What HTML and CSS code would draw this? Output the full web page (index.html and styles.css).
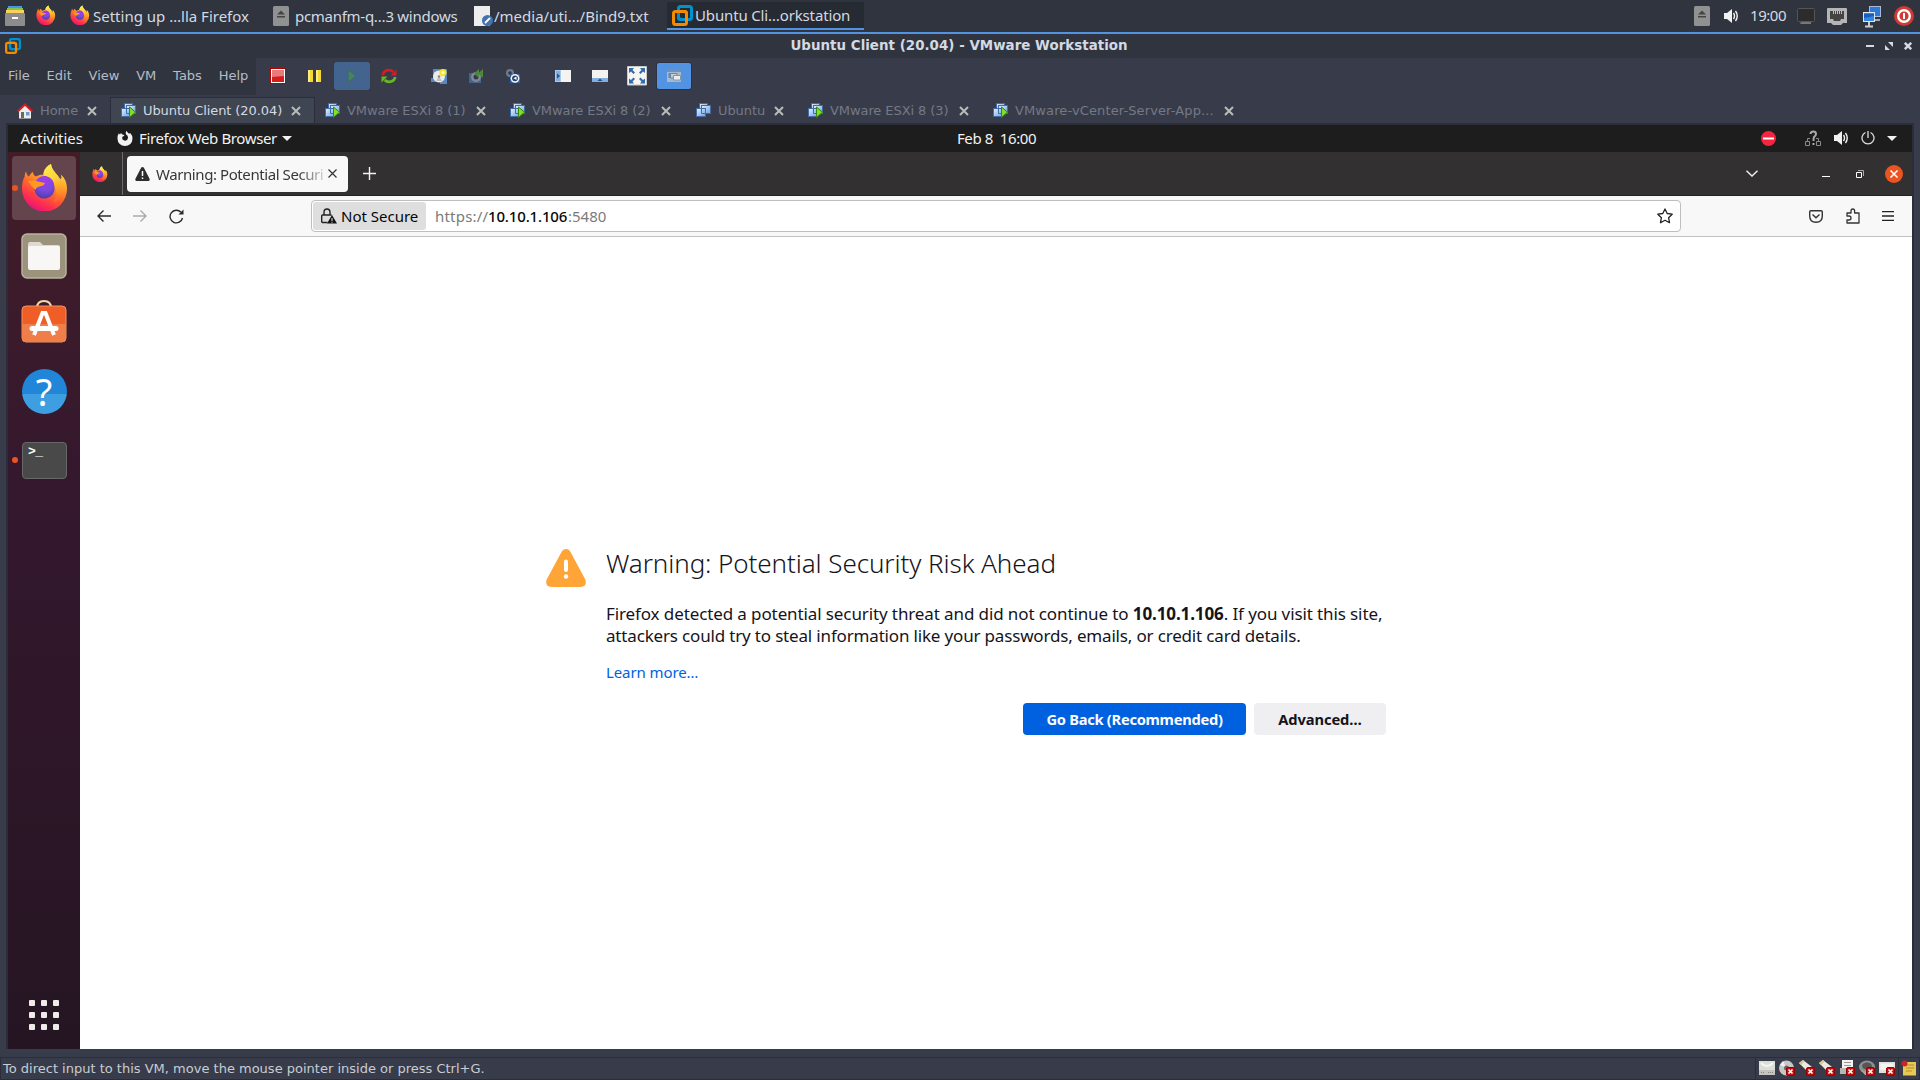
FILE: index.html
```html
<!DOCTYPE html>
<html lang="en">
<head>
<meta charset="utf-8">
<title>Ubuntu Client (20.04) - VMware Workstation</title>
<link rel="stylesheet" href="styles.css">
</head>
<body>
<svg class="defs" width="0" height="0" aria-hidden="true">
  <defs>
    <linearGradient id="ffBody" x1=".8" y1="0" x2=".3" y2="1">
      <stop offset="0" stop-color="#fff44f"/><stop offset=".3" stop-color="#ffb02c"/><stop offset=".55" stop-color="#ff6a2b"/><stop offset=".8" stop-color="#ff2f50"/><stop offset="1" stop-color="#e3117d"/>
    </linearGradient>
    <linearGradient id="ffFlame" x1="0" y1="0" x2=".3" y2="1">
      <stop offset="0" stop-color="#fff350"/><stop offset=".5" stop-color="#ffd03a"/><stop offset="1" stop-color="#ff8a20" stop-opacity=".3"/>
    </linearGradient>
    <radialGradient id="ffGlobe" cx=".55" cy=".15" r=".9">
      <stop offset="0" stop-color="#a738e8"/><stop offset=".55" stop-color="#7a4ae0"/><stop offset="1" stop-color="#4a3aa0"/>
    </radialGradient>
    <linearGradient id="screen" x1="0" y1="0" x2="1" y2="1">
      <stop offset="0" stop-color="#e4f0ff"/><stop offset="1" stop-color="#6fa0dc"/>
    </linearGradient>
    <symbol id="firefox" viewBox="0 0 48 48">
      <path d="M5 8.500C5.500 11 6.500 12.500 8 13.500C9 11.500 10 10 12 9C12 11 13 12.500 15 13.500C18 12 20 11.500 22.500 12C22.500 8 26 3 30 1C30.500 6 34 9 37 13C38 15 39 16 40 16C40.500 14.500 40.500 13 40 11.500C44 15 46 20 46 26A22.500 22.500 0 0 1 1 26C1 20 2 16.500 3.500 14C3.800 12 4 10 5 8.500Z" fill="url(#ffBody)"/>
      <path d="M22.500 12C22 7 26 3 30 1C30.500 6 34 9 37 13C40 17 43 22 41 31C39 36 36 39 32 40C36 34 36 26 32 21C30 17 26 14 22.500 12Z" fill="url(#ffFlame)"/>
      <path d="M15 18Q18 12.500 25 13Q33 15 33.500 24A10 10 0 0 1 13.500 27Q12 23 15 18Z" fill="url(#ffGlobe)"/>
      <path d="M7 18Q13 17 17 18.500L24 20Q23 23 18.500 23.500Q15 24 14.500 27Q11 24 7 18Z" fill="#ff9a1f"/>
    </symbol>
    <symbol id="vmware" viewBox="0 0 21 21">
      <rect x="6.500" y="1.500" width="13" height="13" rx="2" fill="none" stroke="#0091cf" stroke-width="3"/>
      <rect x="1.500" y="6.500" width="13" height="13" rx="2" fill="none" stroke="#f38b00" stroke-width="3"/>
      <path d="M6.500 8V11.500Q6.500 14.500 9.500 14.500H11" fill="none" stroke="#0091cf" stroke-width="3"/>
      <path d="M6 6.500H12.500Q14.500 6.500 14.500 8.500V11" fill="none" stroke="#f38b00" stroke-width="3"/>
    </symbol>
    <symbol id="vm" viewBox="0 0 15 15">
      <g stroke="#3e6da9"><rect x="3.500" y=".5" width="8" height="7" fill="url(#screen)"/><rect x="5.500" y="2.500" width="9" height="8" fill="url(#screen)"/><rect x=".5" y="5.500" width="9" height="8" fill="url(#screen)"/><path d="M5.500 5V10.500H9" fill="none"/></g>
    </symbol>
    <symbol id="vmOn" viewBox="0 0 15 15">
      <use href="#vm" width="15" height="15"/><path d="M8.500 4V14.500L14.500 9.200Z" fill="#7fe02a" stroke="#35860c"/>
    </symbol>
    <symbol id="eject" viewBox="0 0 16 20">
      <rect width="16" height="20" rx="1.500" fill="#919191"/><path d="M4 8.500L8 4.500L12 8.500ZM4 10H12V11.500H4Z" fill="#454545"/>
    </symbol>
    <symbol id="cross" viewBox="0 0 10 10"><path d="M1 1L9 9M9 1L1 9" fill="none" stroke="currentColor" stroke-width="2"/></symbol>
    <symbol id="badge" viewBox="0 0 9 9"><rect x=".5" y=".5" width="8" height="8" rx="1.500" fill="#cf0b0b" stroke="#930000"/><path d="M2.500 2.500L6.500 6.500M6.500 2.500L2.500 6.500" stroke="#fff" stroke-width="1.600"/></symbol>
    <symbol id="speaker" viewBox="0 0 15 14"><path d="M0 4H3L8 0V14L3 10H0Z" fill="#f2f2f2"/><path d="M9.500 4Q11.500 7 9.500 10M11.500 2Q15 7 11.500 12" fill="none" stroke="#f2f2f2" stroke-width="1.400"/></symbol>
    <symbol id="sceneCam" viewBox="0 0 16 16"><rect x="1" y="5" width="12" height="10" fill="#46638c"/><circle cx="8" cy="9" r="5" fill="#838992"/><circle cx="8" cy="9" r="2.500" fill="#333b49"/></symbol>
  </defs>
</svg>

<header class="panel">
  <svg class="p-files" viewBox="0 0 20 20"><path d="M3 0H17V3H3Z" fill="#4795e8"/><path d="M2 2H18V5H2Z" fill="#83c44b"/><path d="M1 4H19V8H1Z" fill="#f9d15b"/><rect y="7" width="20" height="13" rx="1" fill="#8c8c8c"/><path d="M7 11H13V13H7Z" fill="#fff"/></svg>
  <svg class="p-ff"><use href="#firefox"/></svg>
  <div class="task task-ff"><svg class="i20"><use href="#firefox"/></svg><span>Setting up …lla Firefox</span></div>
  <div class="task task-fm"><svg class="i-eject"><use href="#eject"/></svg><span>pcmanfm-q…3 windows</span></div>
  <div class="task task-txt"><svg class="i20" viewBox="0 0 20 20"><path d="M1 0H17V20H1Z" fill="#eee"/><circle cx="14.500" cy="14.500" r="5.500" fill="#4273ad"/><path d="M12 17L17 12" stroke="#fff" stroke-width="1.800"/></svg><span>/media/uti…/Bind9.txt</span></div>
  <div class="task task-vm"><svg class="i21"><use href="#vmware"/></svg><span>Ubuntu Cli…orkstation</span></div>
  <div class="tray">
    <svg class="i-eject"><use href="#eject"/></svg>
    <svg class="i-spk"><use href="#speaker"/></svg>
    <span class="clock">19:00</span>
    <svg class="t-mon" viewBox="0 0 18 16"><rect x=".5" y=".5" width="17" height="13" rx="1" fill="#2c2c2c" stroke="#555"/><path d="M4 14H14V16H3Z" fill="#777"/></svg>
    <svg class="t-eth" viewBox="0 0 20 17"><path d="M1 0H19Q20 0 20 1V15H16L14 17H6L4 15H0V1Q0 0 1 0Z" fill="#b5b5b5"/><path d="M3 3H17V11H14L13 13H7L6 11H3Z" fill="#444"/><path d="M6.500 3V6M8.500 3V6M10.500 3V6M12.500 3V6M14.500 3V6" stroke="#e5c14f"/></svg>
    <svg class="t-net" viewBox="0 0 20 22"><rect x="7.500" y=".5" width="11" height="10" fill="#2d79d9" stroke="#a9bcd5"/><path d="M11 14H18" stroke="#aaa" stroke-width="2"/><rect x="1.500" y="6.500" width="11" height="9" fill="#3187e3" stroke="#dce7f4"/><path d="M2 8H12V10L2 12Z" fill="#1a5dbc"/><path d="M7 16V20M3 20.500H11" stroke="#c9cdd1" stroke-width="2"/></svg>
    <svg class="t-pow" viewBox="0 0 20 20"><circle cx="10" cy="10" r="10" fill="#cf3a32"/><circle cx="10" cy="10" r="5.800" fill="none" stroke="#fff" stroke-width="2.400"/><path d="M10 7V13" stroke="#fff" stroke-width="2"/></svg>
  </div>
</header>

<main class="workstation">
  <div class="titlebar">
    <svg class="title-icon"><use href="#vmware"/></svg>
    <h1>Ubuntu Client (20.04) - VMware Workstation</h1>
    <svg class="title-btns" viewBox="0 0 46 8"><path d="M0 3H8V5H0Z" fill="#d3dae3"/><path d="M19 3V8H24ZM22 0H27V5Z" fill="#d3dae3"/><path d="M38.800 .8L45.200 7.200M45.200 .8L38.800 7.200" stroke="#d3dae3" stroke-width="2.400"/></svg>
  </div>

  <div class="menurow">
    <nav class="menus"><span>File</span><span>Edit</span><span>View</span><span>VM</span><span>Tabs</span><span>Help</span></nav>
    <div class="tools">
      <svg class="tool" viewBox="0 0 16 16"><rect x="1.500" y="1.500" width="13" height="13" fill="#d81c1c" stroke="#fff"/><path d="M2 2H14V8L2 9Z" fill="#e77a7a"/><rect x=".5" y=".5" width="15" height="15" fill="none" stroke="#b90000"/></svg>
      <svg class="tool" viewBox="0 0 16 16"><path d="M1 2H6V14H1ZM9 2H14V14H9Z" fill="#f5d832"/><path d="M1 2H3V14H1ZM9 2H11V14H9Z" fill="#faeb83"/></svg>
      <div class="play"><svg viewBox="0 0 16 16"><path d="M4 1.500L12 8L4 14.500Z" fill="#4a8067" stroke="#3a6b62"/></svg></div>
      <svg class="tool" viewBox="0 0 16 16"><path d="M1.800 7Q3 2.200 8 2.200Q10.500 2.200 12.300 4" fill="none" stroke="#d41c22" stroke-width="2.800"/><path d="M15.500 1.500V7.500H9.500Z" fill="#d41c22"/><path d="M14.200 9Q13 13.800 8 13.800Q5.500 13.800 3.700 12" fill="none" stroke="#65b81f" stroke-width="2.800"/><path d="M.5 14.500V8.500H6.500Z" fill="#65b81f"/></svg>
      <svg class="tool" viewBox="0 0 16 16"><path d="M2 1H16V16H9V14H0V10H2Z" fill="#5a88be"/><circle cx="8" cy="8.500" r="6" fill="#ecebe6"/><path d="M8 8L5 13H11Z" fill="#bfc0c0"/><circle cx="8" cy="8.500" r="1.300" fill="#888"/><circle cx="12" cy="4.500" r="3.600" fill="#f4e326"/><circle cx="12" cy="4.500" r="1.500" fill="#fffbd0"/></svg>
      <svg class="tool" viewBox="0 0 16 16"><use href="#sceneCam" width="16" height="16"/><path d="M15 1V10L10 5.500ZM11 1V10L6 5.500Z" fill="#4d873c"/></svg>
      <svg class="tool" viewBox="0 0 16 16"><circle cx="5" cy="5" r="4" fill="#6f7a8a"/><circle cx="5" cy="5" r="1.800" fill="#303846"/><path d="M5 6H15V15H5Z" fill="#315f9b"/><circle cx="10" cy="10.300" r="4.400" fill="#f3f5f8"/><circle cx="10" cy="10.300" r="2.900" fill="#26436f"/><path d="M11.500 8.500V12L8.500 10.300Z" fill="#fff"/></svg>
      <svg class="tool" viewBox="0 0 16 16"><path d="M0 2H16V14H0Z" fill="#f4f3f0"/><path d="M.5 2.500H5.500V13.500H.5Z" fill="#83aee0" stroke="#a9c9ed"/><path d="M2 5.500L5 8L2 10.500Z" fill="#275186"/></svg>
      <svg class="tool" viewBox="0 0 16 16"><path d="M0 2H16V14H0Z" fill="#f4f3f0"/><path d="M0 10H16V14H0Z" fill="#83aee0"/><path d="M5.500 13L8 10.500L10.500 13Z" fill="#275186"/></svg>
      <svg class="tool full" viewBox="0 0 20 20"><path d="M.5 .5H19.500V19H.5Z" fill="#f6f5f2" stroke="#c9c9c5"/><path d="M2 2H7L5.500 4L8 6.500L6.500 8L4 5.500L2 7ZM18 2H13L14.500 4L12 6.500L13.500 8L16 5.500L18 7ZM2 17.500H7L5.500 15.500L8 13L6.500 11.500L4 14L2 12.500ZM18 17.500H13L14.500 15.500L12 13L13.500 11.500L16 14L18 12.500Z" fill="#316aad"/></svg>
      <div class="unity"><svg viewBox="0 0 16 14"><path d="M1 1H15V13H1Z" fill="#a5b9d1"/><path d="M1 1H15V3H1Z" fill="#6f93c0"/><path d="M2.500 4H4V9H2.500Z" fill="#6685ab"/><path d="M4.500 4.500H11V9H4.500Z" fill="#c3ced9" stroke="#6f86a2"/><path d="M7.500 6.500H14.500V11H7.500Z" fill="#eceeed" stroke="#8796a6"/></svg></div>
    </div>
  </div>

  <div class="vmtabs">
    <div class="vmtab home"><svg class="i16" viewBox="0 0 16 16"><path d="M2 8L8 2L14 8V15.500H2Z" fill="#ececea"/><path d="M4 9H7V15H4Z" fill="#6b6a5b"/><path d="M9 9H12.500V12.500H9Z" fill="#6e9acb"/><path d="M.7 8.500L8 1.500L15.300 8.500" fill="none" stroke="#d81b20" stroke-width="2"/></svg><span>Home</span><svg class="x"><use href="#cross"/></svg></div>
    <div class="vmtab current"><svg class="i15"><use href="#vmOn"/></svg><span>Ubuntu Client (20.04)</span><svg class="x"><use href="#cross"/></svg></div>
    <div class="vmtab esx1"><svg class="i15"><use href="#vmOn"/></svg><span>VMware ESXi 8 (1)</span><svg class="x"><use href="#cross"/></svg></div>
    <div class="vmtab esx2"><svg class="i15"><use href="#vmOn"/></svg><span>VMware ESXi 8 (2)</span><svg class="x"><use href="#cross"/></svg></div>
    <div class="vmtab ubu"><svg class="i15"><use href="#vm"/></svg><span>Ubuntu</span><svg class="x"><use href="#cross"/></svg></div>
    <div class="vmtab esx3"><svg class="i15"><use href="#vmOn"/></svg><span>VMware ESXi 8 (3)</span><svg class="x"><use href="#cross"/></svg></div>
    <div class="vmtab vcsa"><svg class="i15"><use href="#vmOn"/></svg><span>VMware-vCenter-Server-App...</span><svg class="x"><use href="#cross"/></svg></div>
  </div>

  <section class="guest">
    <div class="gnome">
      <span class="activities">Activities</span>
      <div class="appmenu"><svg class="i16" viewBox="0 0 16 16"><path d="M1.800 3.200Q2.300 4.300 3 4.500Q3.500 3.300 4.300 3Q4.500 4.300 5.300 4.600L7.300 4.900Q7.500 6.300 5.700 6.500Q4.300 8 5.800 9.800Q8 11.500 10.300 9.700Q11.800 7.500 10.400 5.600Q7.500 4 9.500 .8Q10 2 11.500 3.200Q12.700 4 13.200 3Q15.700 5.500 15.500 8.800A7.500 7.200 0 1 1 .5 8.800Q.5 5 1.800 3.200Z" fill="#f2f2f2"/></svg><span>Firefox Web Browser</span><i class="caret"></i></div>
      <span class="date">Feb 8&nbsp; 16:00</span>
      <svg class="g-dnd" viewBox="0 0 15 15"><circle cx="7.500" cy="7.500" r="7.500" fill="#f5253f"/><path d="M2 6.500H13V8.500H2Z" fill="#fff"/></svg>
      <svg class="g-net" viewBox="0 0 16 16"><path d="M.5 11.500H4.500V15.500H.5ZM11.500 11.500H15.500V15.500H11.500ZM2.500 11V8.500H5M13.500 11V8.500H11" fill="none" stroke="#8b8b8b"/><path d="M5.500 4Q5.500 1.500 8.500 1.500Q11 1.500 11 4Q11 5.500 9 7Q8.500 8 8.500 11M8.500 13V15" fill="none" stroke="#aaa" stroke-width="2"/></svg>
      <svg class="i-spk"><use href="#speaker"/></svg>
      <svg class="g-pow" viewBox="0 0 14 14"><path d="M4.500 1.500A6 6 0 1 0 9.500 1.500M7 0V7" fill="none" stroke="#ddd" stroke-width="1.300"/></svg>
      <i class="caret"></i>
    </div>

    <div class="desktop">
      <aside class="dock">
        <div class="launcher active"><i class="dot"></i><svg class="d-ff"><use href="#firefox"/></svg></div>
        <svg class="d-files" viewBox="0 0 46 46"><rect x="1" y="1" width="44" height="44" rx="5" fill="#9c937d" stroke="#bab39f" stroke-width="1.500"/><path d="M7 12Q7 9 9 9H19L22 12H37Q39 12 39 14V20H7Z" fill="#dfdacf"/><rect x="7" y="13" width="32" height="24" rx="2" fill="#f8f7f5"/></svg>
        <svg class="d-store" viewBox="0 0 46 44"><path d="M16 9Q16 2 23 2T30 9" fill="none" stroke="#f2d8a7" stroke-width="2"/><rect x="1" y="7" width="44" height="36" rx="4" fill="#ef5e27" stroke="#f49360"/><path d="M1 25H45V39Q45 43 41 43H5Q1 43 1 39Z" fill="#ef7e49"/><path d="M13 36L21.500 14H24.500L33 36" fill="none" stroke="#fff" stroke-width="4"/><path d="M11 29.500H35" stroke="#fff" stroke-width="5" stroke-linecap="round"/></svg>
        <div class="help">?</div>
        <div class="launcher term"><i class="dot"></i><div class="terminal">&gt;_</div></div>
        <svg class="apps" viewBox="0 0 30 30"><g fill="#efebe9"><rect width="6" height="6" rx="1"/><rect x="12" width="6" height="6" rx="1"/><rect x="24" width="6" height="6" rx="1"/><rect y="12" width="6" height="6" rx="1"/><rect x="12" y="12" width="6" height="6" rx="1"/><rect x="24" y="12" width="6" height="6" rx="1"/><rect y="24" width="6" height="6" rx="1"/><rect x="12" y="24" width="6" height="6" rx="1"/><rect x="24" y="24" width="6" height="6" rx="1"/></g></svg>
      </aside>

      <div class="browser">
        <div class="tabstrip">
          <div class="pinned"><svg class="i16"><use href="#firefox"/></svg></div>
          <div class="tab"><svg class="tab-warn" viewBox="0 0 15 14"><path d="M7.500 0Q8.500 0 9 1L14.700 12Q15 14 13.500 14H1.500Q0 14 .3 12L6 1Q6.500 0 7.500 0Z" fill="#2d2d2d"/><path d="M7.500 4V9M7.500 10.500V12" stroke="#fff" stroke-width="1.500"/></svg><span>Warning: Potential Securi</span><svg class="tab-x" viewBox="0 0 9 9"><path d="M.5 .5L8.500 8.500M8.500 .5L.5 8.500" stroke="#333" stroke-width="1.200"/></svg></div>
          <svg class="newtab" viewBox="0 0 13 13"><path d="M6.500 0V13M0 6.500H13" stroke="#f4f4f4" stroke-width="1.400"/></svg>
          <svg class="chev" viewBox="0 0 12 7"><path d="M.5 .8L6 6L11.500 .8" fill="none" stroke="#eee" stroke-width="1.500"/></svg>
          <svg class="w-min" viewBox="0 0 8 1"><path d="M0 0H8V1H0Z" fill="#fff"/></svg>
          <svg class="w-max" viewBox="0 0 8 8"><path d="M.5 2.500H5.500V7.500H.5Z" fill="none" stroke="#fff"/><path d="M2 .5H7.500V6" fill="none" stroke="#aaa"/></svg>
          <svg class="w-close" viewBox="0 0 18 18"><circle cx="9" cy="9" r="9" fill="#e95420"/><path d="M5.500 5.500L12.500 12.500M12.500 5.500L5.500 12.500" stroke="#fff" stroke-width="1.500"/></svg>
        </div>
        <div class="toolbar">
          <svg class="n-back" viewBox="0 0 14 14"><path d="M14 7H1M6.500 1.500L1 7L6.500 12.500" fill="none" stroke="#2b2b2b" stroke-width="1.400"/></svg>
          <svg class="n-fwd" viewBox="0 0 14 14"><path d="M0 7H13M7.500 1.500L13 7L7.500 12.500" fill="none" stroke="#aaa" stroke-width="1.400"/></svg>
          <svg class="n-reload" viewBox="0 0 15 15"><path d="M12 3.300A6.300 6.300 0 1 0 13.500 9" fill="none" stroke="#2b2b2b" stroke-width="1.400"/><path d="M14.500 .5V5.500H9.500Z" fill="#2b2b2b"/></svg>
          <div class="urlbar">
            <div class="identity"><svg class="lock" viewBox="0 0 16 16"><path d="M3 7V4.500Q3 1 6 1T9 4.500V7M6.500 14.500H1.500Q.7 14.500 .7 13.500V8Q.7 7 1.500 7H9.500Q10.500 7 10.500 7.500" fill="none" stroke="#222" stroke-width="1.400"/><path d="M11 7L16 15.500H6Z" fill="#111"/><path d="M11 10V13M11 13.700V14.700" stroke="#ddd" stroke-width="1.100"/></svg><span>Not Secure</span></div>
            <div class="url"><span class="scheme">https://</span><b>10.10.1.106</b><span>:5480</span></div>
            <svg class="star" viewBox="0 0 16 16"><path d="M8 1L10.200 5.500L15.200 6.200L11.600 9.700L12.500 14.700L8 12.300L3.500 14.700L4.400 9.700L.8 6.200L5.800 5.500Z" fill="none" stroke="#222" stroke-width="1.300" stroke-linejoin="round"/></svg>
          </div>
          <svg class="pocket" viewBox="0 0 14 13"><path d="M2 .7H12Q13.300 .7 13.300 2V6Q13.300 12.300 7 12.300T.7 6V2Q.7 .7 2 .7ZM3.500 4.500L7 7.800L10.500 4.500" fill="none" stroke="#333" stroke-width="1.400"/></svg>
          <svg class="puzzle" viewBox="0 0 14 16"><path d="M1 8V5H5V3Q5 1 6.800 1T8.600 3V5H13V15H1V12H3Q5 12 5 10T3 8Z" fill="none" stroke="#333" stroke-width="1.300" stroke-linejoin="round"/></svg>
          <svg class="burger" viewBox="0 0 12 10"><path d="M0 .7H12M0 5H12M0 9.300H12" stroke="#222" stroke-width="1.300"/></svg>
        </div>
        <div class="page">
          <svg class="warn" viewBox="0 0 40 38"><path d="M20 0Q23 0 24.500 3L39.300 30.500Q41.500 37.500 34.500 38H5.500Q-1.500 37.500 .7 30.500L15.500 3Q17 0 20 0Z" fill="#ffa436"/><path d="M20 12.500V21" stroke="#fff" stroke-width="4" stroke-linecap="round"/><circle cx="20" cy="27.500" r="2.200" fill="#fff"/></svg>
          <div class="message">
            <h2>Warning: Potential Security Risk Ahead</h2>
            <p><span class="line1">Firefox detected a potential security threat and did not continue to <b>10.10.1.106</b>. If you visit this site,</span><br><span class="line2">attackers could try to steal information like your passwords, emails, or credit card details.</span></p>
            <a>Learn more…</a>
            <div class="buttons"><button class="primary">Go Back (Recommended)</button><button>Advanced…</button></div>
          </div>
        </div>
      </div>
    </div>
  </section>

  <footer class="status">
    <span>To direct input to this VM, move the mouse pointer inside or press Ctrl+G.</span>
    <div class="devices">
      <svg viewBox="0 0 16 16"><path d="M0 1H16V11L15 15H0Z" fill="#deded9"/><path d="M0 10H16V15H0Z" fill="#c5c5bf"/><path d="M2 3Q8 9 14 3" fill="none" stroke="#f5f5f2" stroke-width="2"/><path d="M2 12.500H6M9 12.500H15" stroke="#838580" stroke-dasharray="1 1"/></svg>
      <svg viewBox="0 0 16 16"><circle cx="7.500" cy="8" r="7.500" fill="#c7c7c5"/><path d="M7.500 8L1 5L4 1ZM7.500 8L14 10L11 14Z" fill="#eee"/><circle cx="7.500" cy="8" r="2.500" fill="#666"/><use href="#badge" x="7" y="7" width="9" height="9"/></svg>
      <svg viewBox="0 0 16 16"><path d="M0 3L4 0L13 7L9 12Z" fill="#eceade"/><path d="M0 3L4 0L5.500 1.500L2 5Z" fill="#d4c899"/><use href="#badge" x="7" y="7" width="9" height="9"/></svg>
      <svg viewBox="0 0 16 16"><path d="M0 3L4 0L13 7L9 12Z" fill="#eceade"/><path d="M0 3L4 0L5.500 1.500L2 5Z" fill="#d4c899"/><use href="#badge" x="7" y="7" width="9" height="9"/></svg>
      <svg viewBox="0 0 16 16"><path d="M3 0H14V8H3Z" fill="#f3f3ef"/><path d="M5 2.500H12M5 5.500H12" stroke="#999"/><path d="M1 8H15V14H1Z" fill="#b7b7b5"/><use href="#badge" x="7" y="7" width="9" height="9"/></svg>
      <svg viewBox="0 0 16 16"><ellipse cx="8" cy="7" rx="8" ry="6.500" fill="#8f8f8c"/><ellipse cx="8" cy="6" rx="5" ry="3.500" fill="#555"/><path d="M1 9Q7 14 14 10L10 15H6Z" fill="#aaa"/><use href="#badge" x="7" y="7" width="9" height="9"/></svg>
      <svg viewBox="0 0 16 16"><path d="M0 2H16V13H0Z" fill="#dfdfdc"/><path d="M1.500 3.500H14.500V10H1.500Z" fill="#f4f4f1"/><use href="#badge" x="7" y="7" width="9" height="9"/></svg>
    </div>
    <div class="note"><svg viewBox="0 0 16 16"><path d="M2 2H15V15.500H2Z" fill="#e8c955"/><path d="M5 5H13M5 8H13M5 11H11" stroke="#b48f25"/><circle cx="3.500" cy="3.500" r="3" fill="#ca242c"/></svg></div>
  </footer>
</main>
</body>
</html>
```
FILE: styles.css
```css
* { box-sizing: border-box; }
body { margin: 0; width: 1920px; height: 1080px; overflow: hidden; background: #383c4a; font-family: "Noto Sans", "Open Sans", sans-serif; color: #d3dae3; display: flex; flex-direction: column; }
svg { display: block; flex: none; }
span, h1, h2, button, a { white-space: nowrap; }
.defs { position: absolute; }
.i16 { width: 16px; height: 16px; }
.i15 { width: 15px; height: 15px; }
.i20 { width: 20px; height: 20px; }
.i21 { width: 21px; height: 21px; }
.i-eject { width: 16px; height: 20px; }
.i-spk { width: 15px; height: 14px; }

/* Host panel */
.panel { height: 34px; display: flex; align-items: flex-start; background: #2f343f; border-bottom: 2px solid #5294e2; font-size: 15px; line-height: 20px; }
.p-files { width: 20px; height: 20px; margin: 6px 0 0 5px; }
.p-ff { width: 20px; height: 20px; margin: 5px 0 0 11px; }
.task { height: 28px; margin-top: 2px; padding-top: 4px; display: flex; }
.task-ff { width: 203px; margin-left: 14px; gap: 3px; }
.task-ff svg { margin-top: -1px; }
.task-fm { width: 200px; gap: 6px; letter-spacing: -.28px; }
.task-txt { width: 194px; gap: 1px; }
.task-vm { width: 197px; padding: 3px 0 0 5px; gap: 2px; letter-spacing: -.15px; background: #262a33; border-bottom: 2px solid #5294e2; }
.tray { display: flex; margin-left: auto; width: 226px; padding-top: 6px; }
.tray .i-spk { margin: 3px 0 0 14px; }
.clock { width: 37px; margin: -1px 0 0 11px; letter-spacing: -.45px; }
.t-mon { width: 18px; height: 16px; margin: 2px 0 0 10px; }
.t-eth { width: 20px; height: 17px; margin: 2px 0 0 12px; }
.t-net { width: 20px; height: 22px; margin-left: 15px; }
.t-pow { width: 20px; height: 20px; margin-left: 12px; }

/* Workstation frame */
.workstation { flex: 1; display: flex; flex-direction: column; font: 13px/16px "DejaVu Sans", sans-serif; }
.titlebar { height: 24px; display: flex; align-items: center; background: #2f343f; padding: 0 8px 0 5px; }
.title-icon { width: 16px; height: 16px; }
.titlebar h1 { flex: 1; margin: 0 0 1px 31px; text-align: center; font: 700 13.400px/17px "DejaVu Sans", sans-serif; letter-spacing: .03px; }
.title-btns { width: 46px; height: 8px; }
.menurow { height: 37px; display: flex; }
.menus { width: 256px; padding: 10px 0 0 8px; background: #2f343f; display: flex; gap: 16.800px; color: #b5bcc8; }
.tools { display: flex; align-items: center; padding: 0 0 1px 14px; }
.tool { width: 16px; height: 16px; }
.tool:nth-child(2) { margin-left: 21px; }
.play { width: 36px; height: 28px; margin-left: 11px; border-radius: 3px; background: #43648f; display: grid; place-items: center; }
.play svg { width: 16px; height: 16px; }
.tool:nth-child(4) { margin-left: 11px; }
.tool:nth-child(5) { margin-left: 34px; }
.tool:nth-child(6) { margin-left: 21px; }
.tool:nth-child(7) { margin-left: 21px; }
.tool:nth-child(8) { margin-left: 34px; }
.tool:nth-child(9) { margin-left: 21px; }
.tool.full { width: 20px; height: 20px; margin-left: 19px; }
.unity { width: 34px; height: 26px; margin-left: 10px; border-radius: 2px; background: #5294e2; box-shadow: 0 0 0 1px #2c3342; display: grid; place-items: center; }
.unity svg { width: 16px; height: 14px; }

.vmtabs { height: 28px; display: flex; color: #747985; letter-spacing: -.08px; }
.vmtab { height: 28px; display: flex; align-items: center; padding-top: 3px; }
.vmtab .x { width: 10px; height: 10px; color: #babcb8; margin: 0 0 0 auto; }
.vmtab span { margin-left: 7px; }
.home { width: 97px; margin-left: 17px; margin-right: -4px; }
.home .x { margin-left: 9px; }
.current { width: 205px; padding-left: 10px; padding-right: 13px; background: #404552; border: 1px solid #2b2e39; border-bottom: 0; color: #d3dae3; height: 26px; margin-top: 2px; padding-top: 0; }
.esx1 { width: 161px; margin-left: 10px; }
.esx2 { width: 161px; margin-left: 24px; }
.ubu { width: 88px; margin-left: 25px; }
.esx3 { width: 161px; margin-left: 24px; }
.vcsa { width: 241px; margin-left: 24px; }
.vcsa span { letter-spacing: .12px; }

/* Guest screen */
.guest { height: 926px; width: 1908px; margin-left: 6px; border: 2px solid #2b2e39; border-bottom: 0; display: flex; flex-direction: column; font: 15px/20px "Noto Sans", sans-serif; }
.gnome { height: 27px; background: #1d1d1d; color: #f2f2f2; display: flex; align-items: center; padding-bottom: 1px; }
.gnome span { margin-top: -1px; }
.gnome .activities { width: 62px; margin-left: 12.500px; }
.appmenu { display: flex; align-items: center; width: 183px; margin-left: 34.500px; letter-spacing: -.38px; }
.appmenu span { width: 138px; margin-left: 6px; }
.caret { border: 5px solid transparent; border-top-color: #f2f2f2; border-bottom: 0; }
.appmenu .caret { margin-left: 5px; }
.gnome .date { width: 81px; margin-left: 657px; letter-spacing: -.42px; }
.g-dnd { width: 15px; height: 15px; margin-left: 723px; }
.g-net { width: 16px; height: 16px; margin-left: 29px; }
.gnome .i-spk { margin-left: 13px; }
.g-pow { width: 14px; height: 14px; margin-left: 12px; }
.g-pow + .caret { margin-left: 12px; }
.desktop { flex: 1; display: flex; }
.dock { width: 72px; background: linear-gradient(#421d28, #35182e 35%, #251522); display: flex; flex-direction: column; align-items: center; }
.launcher { width: 64px; height: 64px; margin-top: 4px; display: flex; align-items: center; border-radius: 4px; }
.active { background: #64454d; }
.dot { width: 6px; height: 6px; border-radius: 50%; background: #e95420; }
.d-ff { width: 48px; height: 48px; margin: -2px 0 0 3px; }
.d-files { width: 46px; height: 46px; margin-top: 13px; }
.d-store { width: 46px; height: 44px; margin-top: 20px; }
.help { width: 45px; height: 45px; margin-top: 26px; border-radius: 50%; background: linear-gradient(#2185d8 0 55%, #3d9fe2 55%); color: #fff; font: 38px/44px "Noto Sans", sans-serif; text-align: center; }
.term { margin-top: 14px; }
.terminal { width: 45px; height: 37px; margin-left: 4px; border: 1px solid #686868; border-radius: 4px; background: #494949; color: #fff; font: 700 13px/17px "Liberation Mono", monospace; padding-left: 5px; letter-spacing: -.5px; }
.apps { width: 30px; height: 30px; margin: auto 0 19px; }

/* Firefox window */
.browser { width: 1832px; display: flex; flex-direction: column; background: #fff; }
.tabstrip { height: 44px; background: #323031; border-bottom: 1px solid #222; display: flex; align-items: center; }
.pinned { width: 43px; height: 43px; padding: 14px 0 0 12px; border-right: 1px solid #6a6a6a; }
.tab { width: 221px; height: 36px; margin-left: 4px; padding-left: 8px; border-radius: 4px; background: #f8f8f8; color: #383838; display: flex; align-items: center; }
.tab-warn { width: 15px; height: 14px; }
.tab span { width: 169px; margin-left: 6px; overflow: hidden; letter-spacing: -.42px; -webkit-mask-image: linear-gradient(90deg, #000 84%, rgba(0, 0, 0, .15)); mask-image: linear-gradient(90deg, #000 84%, rgba(0, 0, 0, .15)); }
.tab-x { width: 9px; height: 9px; margin-left: 3px; }
.newtab { width: 13px; height: 13px; margin-left: 15px; }
.chev { width: 12px; height: 7px; margin-left: auto; }
.w-min { width: 8px; height: 1px; margin: 5px 0 0 64px; }
.w-max { width: 8px; height: 8px; margin-left: 26px; }
.w-close { width: 18px; height: 18px; margin: 0 9px 0 21px; }
.toolbar { height: 41px; background: #f8f8f8; border-bottom: 1px solid #c1c1c1; display: flex; align-items: center; }
.n-back { width: 14px; height: 14px; margin-left: 17px; }
.n-fwd { width: 14px; height: 14px; margin-left: 22px; }
.n-reload { width: 15px; height: 15px; margin: 1px 0 0 22px; }
.urlbar { width: 1370px; height: 32px; margin-left: 127px; border: 1px solid #bebebe; border-radius: 4px; background: #fff; display: flex; align-items: center; padding-left: 1px; }
.identity { width: 113px; height: 28px; border-radius: 3px; background: #dedede; color: #050505; display: flex; align-items: center; padding-left: 8px; }
.lock { width: 16px; height: 16px; }
.identity span { margin-left: 4px; }
.url { color: #7b7b7b; margin-left: 9px; display: flex; }
.scheme { width: 53px; letter-spacing: .2px; }
.url b { width: 80px; font-weight: 500; color: #080808; letter-spacing: -.15px; }
.star { width: 16px; height: 16px; margin: 0 7px 0 auto; }
.pocket { width: 14px; height: 13px; margin-left: 128px; }
.puzzle { width: 14px; height: 16px; margin-left: 23px; }
.burger { width: 12px; height: 10px; margin-left: 22px; }

/* Certificate warning */
.page { flex: 1; display: flex; align-items: flex-start; padding: 312px 0 0 466px; color: #15141a; }
.warn { width: 40px; height: 38px; }
.message { width: 780px; margin-left: 20px; }
.message h2 { margin: -4px 0 0; font-size: 26px; font-weight: 300; line-height: 36px; letter-spacing: -.08px; }
.message p { margin: 22px 0 0; font-size: 17px; line-height: 22px; }
.line1 { letter-spacing: -.11px; }
.line2 { letter-spacing: -.17px; }
.message a { display: block; margin-top: 15px; line-height: 20px; color: #0061e0; letter-spacing: -.1px; }
.buttons { display: flex; justify-content: flex-end; gap: 8px; margin-top: 21px; }
.buttons button { width: 132px; height: 32px; padding: 0; border: 0; border-radius: 4px; background: #efeff1; color: #15141a; font: 700 14.700px/20px "Noto Sans", sans-serif; letter-spacing: -.1px; }
.buttons .primary { width: 223px; background: #0061e0; color: #fbfbfe; letter-spacing: -.28px; }

/* Status bar */
.status { height: 23px; margin-top: auto; border: 1px solid #2b2e39; padding-left: 2px; display: flex; align-items: center; color: #c7ccd5; }
.devices { display: flex; gap: 4px; margin-left: auto; border-left: 1px solid #2b2e39; height: 21px; align-items: center; padding: 0 3px 2px 3px; }
.devices svg, .note svg { width: 16px; height: 16px; }
.note { height: 21px; border-left: 1px solid #2b2e39; display: flex; align-items: center; padding: 0 2px 2px; }
```
